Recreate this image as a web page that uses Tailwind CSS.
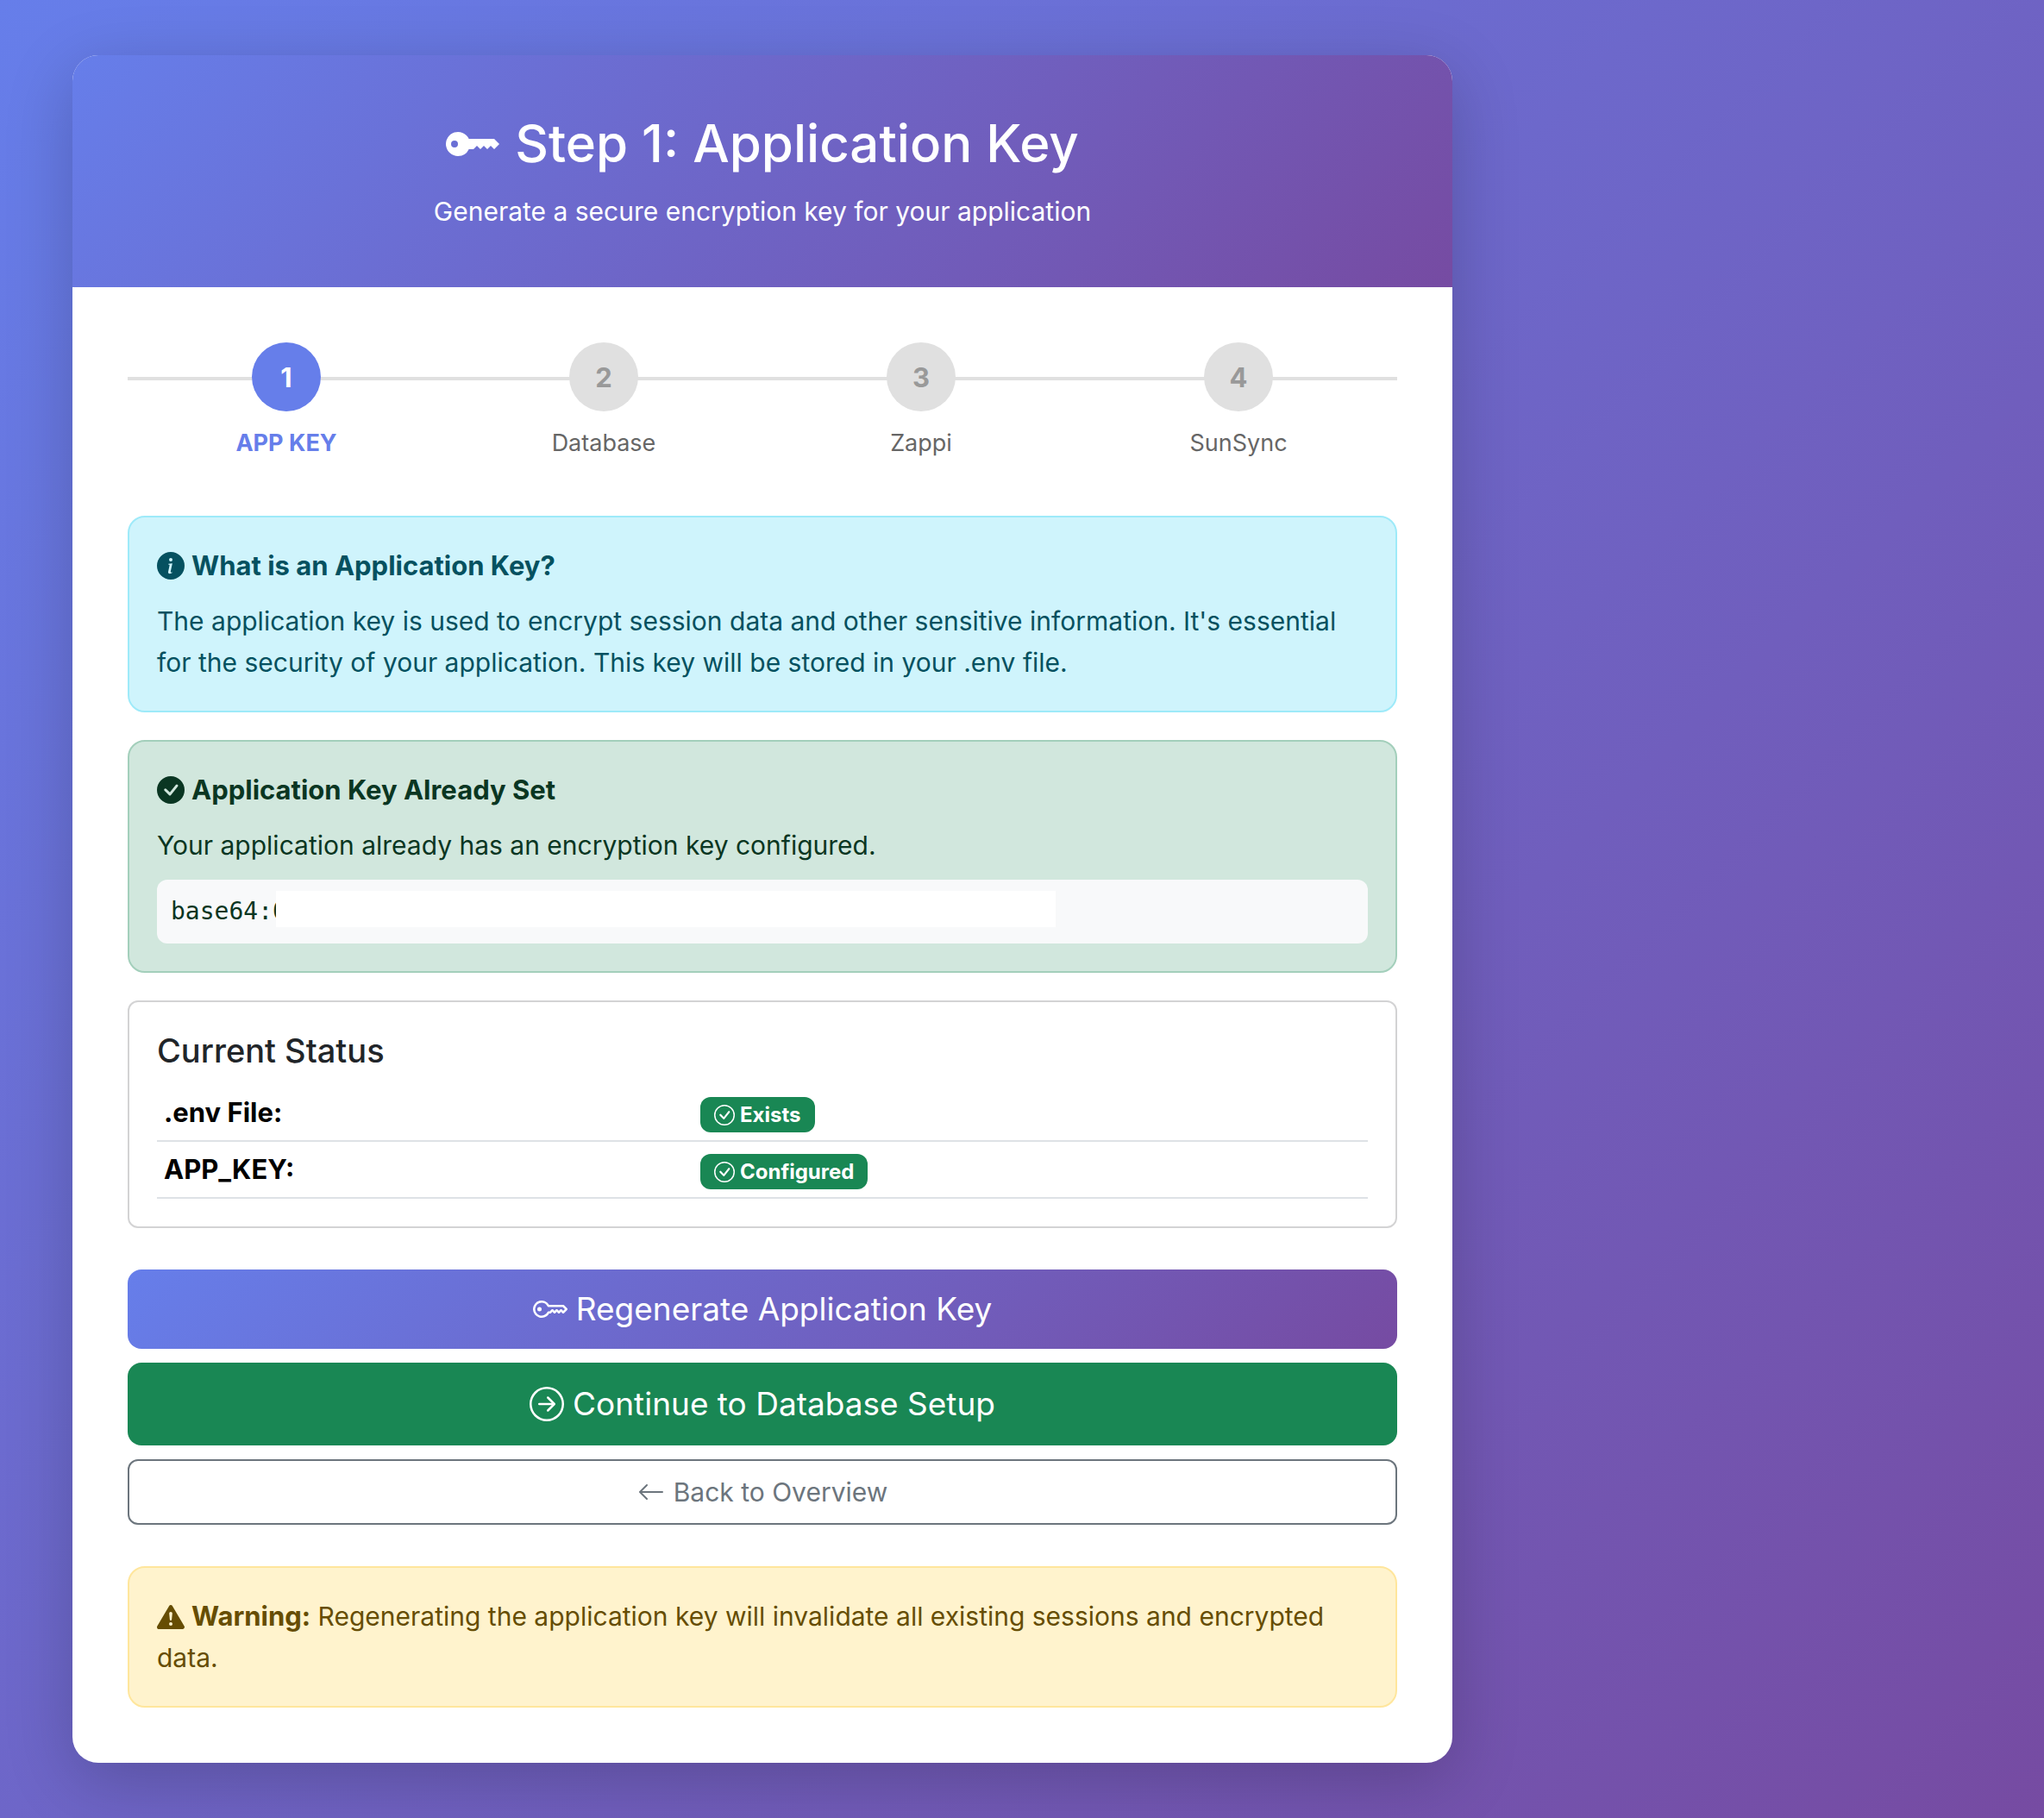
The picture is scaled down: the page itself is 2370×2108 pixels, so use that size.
<!DOCTYPE html>
<html lang="en">
<head>
<meta charset="utf-8">
<title>Step 1: Application Key</title>
<script src="https://cdn.jsdelivr.net/npm/@tailwindcss/browser@4"></script>
</head>
<body class="min-h-screen bg-linear-[135deg] from-[#667eea] to-[#764ba2] py-16 pl-[84px] pr-4 font-['Inter',sans-serif] text-[30px] leading-12 text-[#212529]">
<svg class="hidden" aria-hidden="true">
  <symbol id="key-fill" viewBox="0 0 16 16"><path d="M3.5 11.5a3.5 3.5 0 1 1 3.163-5H14L15.5 8 14 9.5l-1-1-1 1-1-1-1 1-1-1-1 1H6.663a3.5 3.5 0 0 1-3.163 2zM2.5 9a1 1 0 1 0 0-2 1 1 0 0 0 0 2z"/></symbol>
  <symbol id="key" viewBox="0 0 16 16"><path d="M0 8a4 4 0 0 1 7.465-2H14a.5.5 0 0 1 .354.146l1.5 1.5a.5.5 0 0 1 0 .708l-1.5 1.5a.5.5 0 0 1-.708 0L13 9.207l-.646.647a.5.5 0 0 1-.708 0L11 9.207l-.646.647a.5.5 0 0 1-.708 0L9 9.207l-.646.647A.5.5 0 0 1 8 10h-.535A4 4 0 0 1 0 8zm4-3a3 3 0 1 0 2.712 4.285A.5.5 0 0 1 7.163 9h.63l.853-.854a.5.5 0 0 1 .708 0l.646.647.646-.647a.5.5 0 0 1 .708 0l.646.647.646-.647a.5.5 0 0 1 .708 0l.646.647.793-.793-1-1h-6.63a.5.5 0 0 1-.451-.285A3 3 0 0 0 4 5z"/><path d="M4 8a1 1 0 1 1-2 0 1 1 0 0 1 2 0z"/></symbol>
  <symbol id="info" viewBox="0 0 16 16"><path d="M8 16A8 8 0 1 0 8 0a8 8 0 0 0 0 16zm.93-9.412-1 4.705c-.07.34.029.533.304.533.194 0 .487-.07.686-.246l-.088.416c-.287.346-.92.598-1.465.598-.703 0-1.002-.422-.808-1.319l.738-3.468c.064-.293.006-.399-.287-.47l-.451-.081.082-.381 2.29-.287zM8 5.5a1 1 0 1 1 0-2 1 1 0 0 1 0 2z"/></symbol>
  <symbol id="check-fill" viewBox="0 0 16 16"><path d="M16 8A8 8 0 1 1 0 8a8 8 0 0 1 16 0zm-3.97-3.03a.75.75 0 0 0-1.08.022L7.477 9.417 5.384 7.323a.75.75 0 0 0-1.06 1.06L6.97 11.03a.75.75 0 0 0 1.079-.02l3.992-4.99a.75.75 0 0 0-.01-1.05z"/></symbol>
  <symbol id="check" viewBox="0 0 16 16"><path d="M8 15A7 7 0 1 1 8 1a7 7 0 0 1 0 14zm0 1A8 8 0 1 0 8 0a8 8 0 0 0 0 16z"/><path d="M10.97 4.97a.235.235 0 0 0-.02.022L7.477 9.417 5.384 7.323a.75.75 0 0 0-1.06 1.06L6.97 11.03a.75.75 0 0 0 1.079-.02l3.992-4.99a.75.75 0 0 0-1.071-1.05z"/></symbol>
  <symbol id="arrow-circle" viewBox="0 0 16 16"><path fill-rule="evenodd" d="M1 8a7 7 0 1 0 14 0A7 7 0 0 0 1 8zm15 0A8 8 0 1 1 0 8a8 8 0 0 1 16 0zM4.5 7.5a.5.5 0 0 0 0 1h5.793l-2.147 2.146a.5.5 0 0 0 .708.708l3-3a.5.5 0 0 0 0-.708l-3-3a.5.5 0 1 0-.708.708L10.293 7.5H4.5z"/></symbol>
  <symbol id="arrow-left" viewBox="0 0 16 16"><path fill-rule="evenodd" d="M15 8a.5.5 0 0 0-.5-.5H2.707l3.147-3.146a.5.5 0 1 0-.708-.708l-4 4a.5.5 0 0 0 0 .708l4 4a.5.5 0 0 0 .708-.708L2.707 8.5H14.5A.5.5 0 0 0 15 8z"/></symbol>
  <symbol id="warning" viewBox="0 0 16 16"><path d="M8.982 1.566a1.13 1.13 0 0 0-1.96 0L.165 13.233c-.457.778.091 1.767.98 1.767h13.713c.889 0 1.438-.99.98-1.767L8.982 1.566zM8 5c.535 0 .954.462.9.995l-.35 3.507a.552.552 0 0 1-1.1 0L7.1 5.995A.905.905 0 0 1 8 5zm.002 6a1 1 0 1 1 0 2 1 1 0 0 1 0-2z"/></symbol>
</svg>

<main class="max-w-[1600px] overflow-hidden rounded-[30px] bg-white shadow-[0_20px_80px_rgba(0,0,0,0.2)]">
  <header class="bg-linear-[135deg] from-[#667eea] to-[#764ba2] p-16 text-center text-white">
    <h1 class="mb-4 flex items-center justify-center gap-4 text-[60px] leading-[77px] font-medium">
      <svg class="size-16 fill-current" aria-hidden="true"><use href="#key-fill"/></svg>Step 1: Application Key
    </h1>
    <p>Generate a secure encryption key for your application</p>
  </header>

  <div class="p-16">
    <ol class="relative mb-16 grid grid-cols-4 text-center text-[27px] leading-[41px] text-[#666]">
      <li class="absolute inset-x-0 top-10 h-1 bg-[#e0e0e0]" aria-hidden="true"></li>
      <li class="relative flex flex-col items-center gap-4 font-bold text-[#667eea]" aria-current="step">
        <span class="flex size-20 items-center justify-center rounded-full bg-[#667eea] text-[31px] text-white">1</span>APP KEY
      </li>
      <li class="relative flex flex-col items-center gap-4">
        <span class="flex size-20 items-center justify-center rounded-full bg-[#e0e0e0] text-[31px] font-bold text-[#999]">2</span>Database
      </li>
      <li class="relative flex flex-col items-center gap-4">
        <span class="flex size-20 items-center justify-center rounded-full bg-[#e0e0e0] text-[31px] font-bold text-[#999]">3</span>Zappi
      </li>
      <li class="relative flex flex-col items-center gap-4">
        <span class="flex size-20 items-center justify-center rounded-full bg-[#e0e0e0] text-[31px] font-bold text-[#999]">4</span>SunSync
      </li>
    </ol>

    <section class="mb-8 rounded-[20px] border-2 border-[#9eeaf9] bg-[#cff4fc] p-8 text-[#055160]">
      <h2 class="mb-4 flex items-center gap-2 text-[31px] leading-12 font-bold">
        <svg class="size-8 fill-current" aria-hidden="true"><use href="#info"/></svg>What is an Application Key?
      </h2>
      <p>The application key is used to encrypt session data and other sensitive information. It's essential for the security of your application. This key will be stored in your .env file.</p>
    </section>

    <section class="mb-8 rounded-[20px] border-2 border-[#a3cfbb] bg-[#d1e7dd] p-8 text-[#0a3622]">
      <h2 class="mb-4 flex items-center gap-2 text-[31px] leading-12 font-bold">
        <svg class="size-8 fill-current" aria-hidden="true"><use href="#check-fill"/></svg>Application Key Already Set
      </h2>
      <p class="mb-4">Your application already has an encryption key configured.</p>
      <div class="relative rounded-xl bg-[#f8f9fa] p-4 font-['DejaVu_Sans_Mono',monospace] text-[28px] leading-[42px]">
        <code class="font-['DejaVu_Sans_Mono',monospace]">base64:0</code>
        <span class="absolute top-[13px] left-[138px] h-[42px] w-[904px] max-w-9/10 bg-white" aria-hidden="true"></span>
      </div>
    </section>

    <section class="mb-12 rounded-xl border-2 border-[#d3d3d4] p-8">
      <h2 class="mb-4 text-[38px] leading-12 font-medium">Current Status</h2>
      <table class="w-full table-fixed text-left text-black">
        <tbody>
          <tr class="border-b-2 border-[#dee2e6]">
            <th scope="row" class="w-[622px] p-2 text-[31px] leading-12 font-bold">.env File:</th>
            <td class="p-2"><span class="inline-flex h-[41px] items-center gap-[6px] rounded-xl bg-[#198754] px-4 align-middle text-2xl leading-6 font-bold text-white"><svg class="size-6 fill-current" aria-hidden="true"><use href="#check"/></svg>Exists</span></td>
          </tr>
          <tr class="border-b-2 border-[#dee2e6]">
            <th scope="row" class="p-2 text-[31px] leading-12 font-bold">APP_KEY:</th>
            <td class="p-2"><span class="inline-flex h-[41px] items-center gap-[6px] rounded-xl bg-[#198754] px-4 align-middle text-2xl leading-6 font-bold text-white"><svg class="size-6 fill-current" aria-hidden="true"><use href="#check"/></svg>Configured</span></td>
          </tr>
        </tbody>
      </table>
    </section>

    <div class="mb-12 grid gap-4">
      <button type="button" class="flex h-[92px] items-center justify-center gap-[10px] rounded-2xl bg-linear-[135deg] from-[#667eea] to-[#764ba2] text-[37px] text-white">
        <svg class="size-10 fill-current" aria-hidden="true"><use href="#key"/></svg>Regenerate Application Key
      </button>
      <a href="#database" class="flex h-24 items-center justify-center gap-[10px] rounded-2xl bg-[#198754] text-[37px] text-white">
        <svg class="size-10 fill-current" aria-hidden="true"><use href="#arrow-circle"/></svg>Continue to Database Setup
      </a>
      <a href="#overview" class="flex h-[76px] items-center justify-center gap-[10px] rounded-xl border-2 border-[#6c757d] text-[#6c757d]">
        <svg class="size-8 fill-current" aria-hidden="true"><use href="#arrow-left"/></svg>Back to Overview
      </a>
    </div>

    <p class="rounded-[20px] border-2 border-[#ffe69c] bg-[#fff3cd] p-8 text-[#664d03]" role="alert">
      <svg class="mr-2 inline size-8 -translate-y-0.5 fill-current" aria-hidden="true"><use href="#warning"/></svg><strong class="text-[31px] font-bold">Warning:</strong> Regenerating the application key will invalidate all existing sessions and encrypted data.
    </p>
  </div>
</main>
</body>
</html>
